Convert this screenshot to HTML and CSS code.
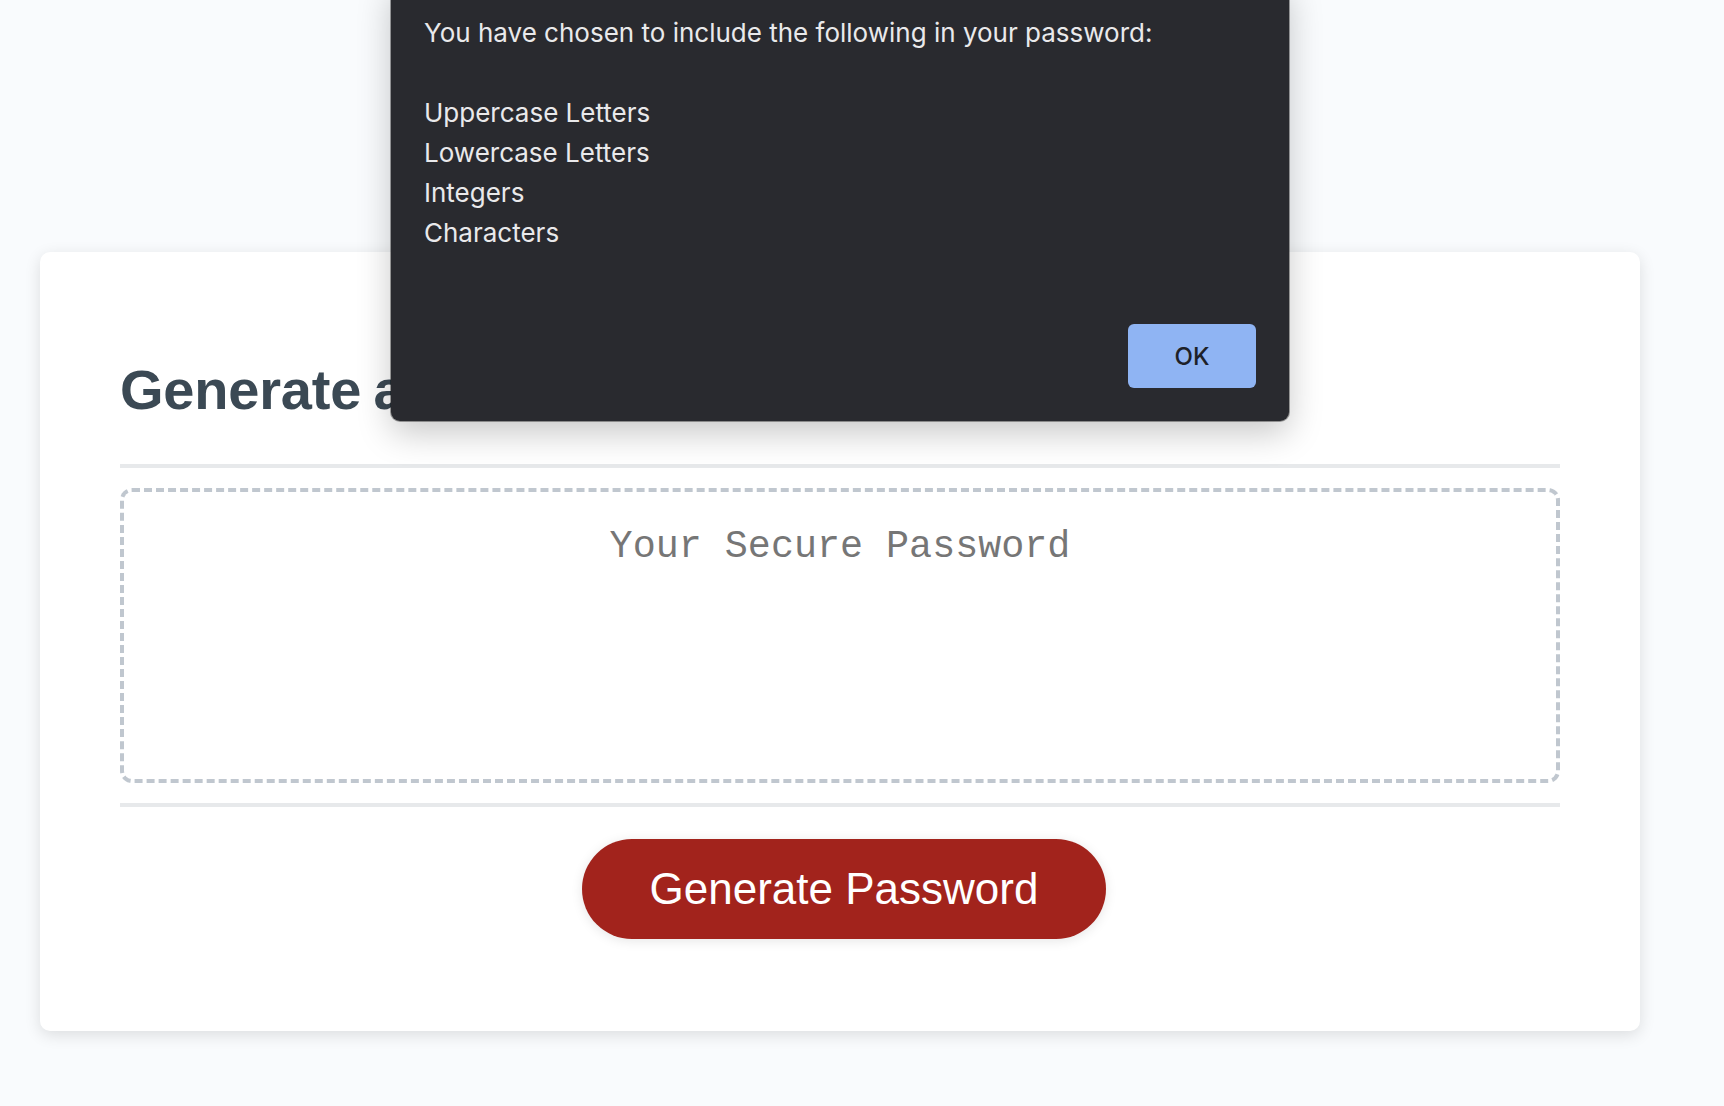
FILE: index.html
```html
<!DOCTYPE html>
<html lang="en">
<head>
<meta charset="UTF-8">
<title>Password Generator</title>
<link rel="stylesheet" href="styles.css">
</head>
<body>
<div class="wrapper">
  <div class="card">
    <div class="card-header">
      <h2>Generate a Password</h2>
    </div>
    <div class="card-body">
      <textarea readonly id="password" class="password" rows="2" placeholder="Your Secure Password" aria-label="Generated Password"></textarea>
    </div>
    <div class="card-footer">
      <button id="generate" class="btn">Generate Password</button>
    </div>
  </div>
</div>

<div class="alert" role="alertdialog">
  <div class="alert-message">
    <p class="alert-line">You have chosen to include the following in your password:</p>
    <p class="alert-line">&nbsp;</p>
    <p class="alert-line">Uppercase Letters</p>
    <p class="alert-line">Lowercase Letters</p>
    <p class="alert-line">Integers</p>
    <p class="alert-line">Characters</p>
  </div>
  <div class="alert-actions">
    <button class="alert-ok">OK</button>
  </div>
</div>
</body>
</html>
```

FILE: styles.css
```css
*,
*::before,
*::after {
  box-sizing: border-box;
}

html,
body {
  margin: 0;
  padding: 0;
}

body {
  font-family: "Liberation Sans", Arial, sans-serif;
  background-color: #f9fbfd;
  min-height: 1106px;
}

.wrapper {
  padding: 252px 84px 76px 40px;
}

.card {
  background-color: #ffffff;
  border-radius: 10px;
  box-shadow: rgba(0, 0, 0, 0.12) 0 4px 16px 0;
  color: #3b4954;
  font-size: 36px;
  width: 1600px;
  padding: 60px 80px;
}

.card-header h2 {
  font-size: 56px;
  line-height: 62px;
  font-weight: 700;
  margin: 47px 0 42.5px;
  letter-spacing: -0.2px;
  word-spacing: -3px;
}

.card-header::after {
  content: " ";
  display: block;
  width: 100%;
  background: #e7e9eb;
  height: 4px;
}

.card-body {
  min-height: 200px;
}

.password {
  display: block;
  width: 100%;
  height: 295px;
  margin: 20px 0;
  padding: 34px 30px 166px;
  font-family: "Liberation Mono", "Courier New", monospace;
  font-size: 38.4px;
  line-height: 43.5px;
  text-align: center;
  color: #333;
  background: #fff;
  border: 4px dashed #c0c7cf;
  border-radius: 12px;
  resize: none;
  overflow: hidden;
  outline: none;
}

.password::placeholder {
  color: #767676;
}

.card-footer {
  text-align: center;
}

.card-footer::before {
  content: " ";
  display: block;
  width: 100%;
  background: #e7e9eb;
  height: 4px;
}

.card-footer::after {
  content: " ";
  display: block;
  clear: both;
}

.btn {
  border: none;
  background-color: #a2231c;
  border-radius: 50px;
  box-shadow: rgba(0, 0, 0, 0.1) 0 2px 12px 0;
  color: #ffffff;
  display: inline-block;
  font-family: "Liberation Sans", Arial, sans-serif;
  font-size: 44px;
  line-height: 44px;
  margin: 32px 32px 32px 40px;
  padding: 28px 68px;
  text-align: center;
  cursor: pointer;
}

/* native-looking alert overlay */
.alert {
  position: absolute;
  top: -20px;
  left: 391px;
  width: 898px;
  height: 441px;
  background: #292a2f;
  border-radius: 9px;
  box-shadow: 0 12px 34px rgba(0, 0, 0, 0.22), 0 0 0 1px rgba(0, 0, 0, 0.35);
  padding: 33px 33px 33px 33px;
  display: flex;
  flex-direction: column;
  justify-content: space-between;
  font-family: Inter, "Noto Sans", sans-serif;
  color: #e9e9eb;
}

.alert-message {
  display: flex;
  flex-direction: column;
}

.alert-line {
  margin: 0;
  font-size: 26px;
  line-height: 40px;
  white-space: pre;
}

.alert-actions {
  display: flex;
  justify-content: flex-end;
}

.alert-ok {
  width: 128px;
  height: 64px;
  border: none;
  border-radius: 6px;
  background: #8fb4f3;
  color: #1d2129;
  font-family: Inter, "Noto Sans", sans-serif;
  font-size: 24px;
  font-weight: 500;
  cursor: pointer;
}
```
